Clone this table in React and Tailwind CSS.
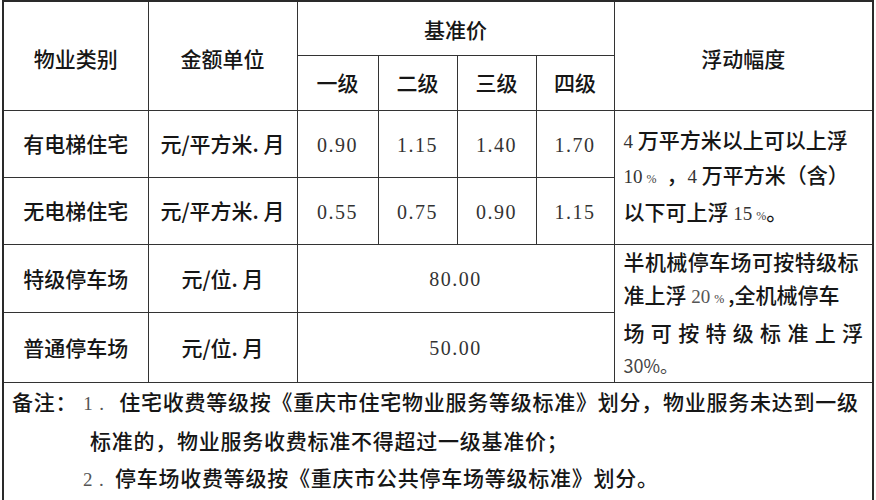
const sans = "font-[family-name:'Noto_Sans_CJK_SC',sans-serif]";
const serif = "font-[family-name:'Liberation_Serif',serif]";

function Num(props) {
    return <span className={`${serif} font-normal text-[20px] tracking-[1.5px] text-[#333]`}>{props.children}</span>;
}

function Pct() {
    return <span className={`${serif} font-normal text-[12px] text-[#444] mx-[4px]`}>%</span>;
}

function Cell(props) {
    return (
        <td
            rowSpan={props.rowSpan}
            colSpan={props.colSpan}
            className={`border border-[#333] text-center align-middle p-0 ${props.className || ""}`}
        >
            {props.children}
        </td>
    );
}

export default function App() {
    return (
        <div className={`bg-white w-[876px] h-[500px] pl-[2px] ${sans} font-medium text-[#161616]`}>
            <table className="border-collapse table-fixed border-2 border-[#2a2a2a] w-[870px] text-[21px] leading-none">
                <colgroup>
                    <col className="w-[145px]" />
                    <col className="w-[149px]" />
                    <col className="w-[81px]" />
                    <col className="w-[79px]" />
                    <col className="w-[79px]" />
                    <col className="w-[78px]" />
                    <col className="w-[259px]" />
                </colgroup>
                <tbody>
                    <tr className="h-[54px]">
                        <Cell rowSpan={2} className="pt-[6px]">物业类别</Cell>
                        <Cell rowSpan={2} className="pt-[6px]">金额单位</Cell>
                        <Cell colSpan={4} className="pt-[2px]">基准价</Cell>
                        <Cell rowSpan={2} className="pt-[6px]">浮动幅度</Cell>
                    </tr>
                    <tr className="h-[55px]">
                        <Cell>一级</Cell>
                        <Cell>二级</Cell>
                        <Cell>三级</Cell>
                        <Cell>四级</Cell>
                    </tr>
                    <tr className="h-[67px]">
                        <Cell>有电梯住宅</Cell>
                        <Cell>元/平方米. 月</Cell>
                        <Cell><Num>0.90</Num></Cell>
                        <Cell><Num>1.15</Num></Cell>
                        <Cell><Num>1.40</Num></Cell>
                        <Cell><Num>1.70</Num></Cell>
                        <Cell rowSpan={2} className="text-left px-[9px] leading-[32px]">
                            <div><span className={`${serif} font-normal text-[19px] text-[#333]`}>4</span> 万平方米以上可以上浮</div>
                            <div>
                                <span className={`${serif} font-normal text-[19px] text-[#333]`}>10</span>
                                <Pct />
                                <span className="ml-[6px]">，</span>
                                <span className={`${serif} font-normal text-[19px] text-[#333]`}>4</span> 万平方米（含）
                            </div>
                            <div>
                                以下可上浮 <span className={`${serif} font-normal text-[19px] text-[#333]`}>15</span>
                                <Pct />
                                <span className="-ml-[4px]">。</span>
                            </div>
                        </Cell>
                    </tr>
                    <tr className="h-[67px]">
                        <Cell>无电梯住宅</Cell>
                        <Cell>元/平方米. 月</Cell>
                        <Cell><Num>0.55</Num></Cell>
                        <Cell><Num>0.75</Num></Cell>
                        <Cell><Num>0.90</Num></Cell>
                        <Cell><Num>1.15</Num></Cell>
                    </tr>
                    <tr className="h-[64px]">
                        <Cell>特级停车场</Cell>
                        <Cell>元/位. 月</Cell>
                        <Cell colSpan={4}><Num>80.00</Num></Cell>
                        <Cell rowSpan={2} className="text-left px-[9px] leading-[33px]">
                            <div className="tracking-[0.4px]">半机械停车场可按特级标</div>
                            <div>
                                准上浮 <span className={`${serif} font-normal text-[19px] text-[#555]`}>20</span>
                                <Pct />
                                <span>,</span>全机械停车
                            </div>
                            <div className="flex justify-between">
                                {"场可按特级标准上浮".split("").map((c, i) => (
                                    <span key={i}>{c}</span>
                                ))}
                            </div>
                            <div className="text-[18px] font-normal text-[#444]">30%。</div>
                        </Cell>
                    </tr>
                    <tr className="h-[65px]">
                        <Cell>普通停车场</Cell>
                        <Cell>元/位. 月</Cell>
                        <Cell colSpan={4}><Num>50.00</Num></Cell>
                    </tr>
                    <tr className="h-[119px]">
                        <td colSpan={7} className="border border-[#333] align-top px-[8px] pt-0 text-left leading-[37px] tracking-[0.75px]">
                            <div className="whitespace-nowrap">
                                备注：
                                <span className={`${serif} font-normal inline-block w-[22px] text-center text-[19px] text-[#555]`}>1</span>
                                <span className={`${serif} font-normal inline-block w-[20px] text-left text-[19px] text-[#555]`}>.</span>
                                住宅收费等级按《重庆市住宅物业服务等级标准》划分，物业服务未达到一级
                            </div>
                            <div className="pl-[78px] whitespace-nowrap">标准的，物业服务收费标准不得超过一级基准价；</div>
                            <div className="pl-[65px] whitespace-nowrap">
                                <span className={`${serif} font-normal inline-block w-[22px] text-center text-[19px] text-[#555]`}>2</span>
                                <span className={`${serif} font-normal inline-block w-[16px] text-left text-[19px] text-[#555]`}>.</span>
                                停车场收费等级按《重庆市公共停车场等级标准》划分。
                            </div>
                        </td>
                    </tr>
                </tbody>
            </table>
        </div>
    );
}
